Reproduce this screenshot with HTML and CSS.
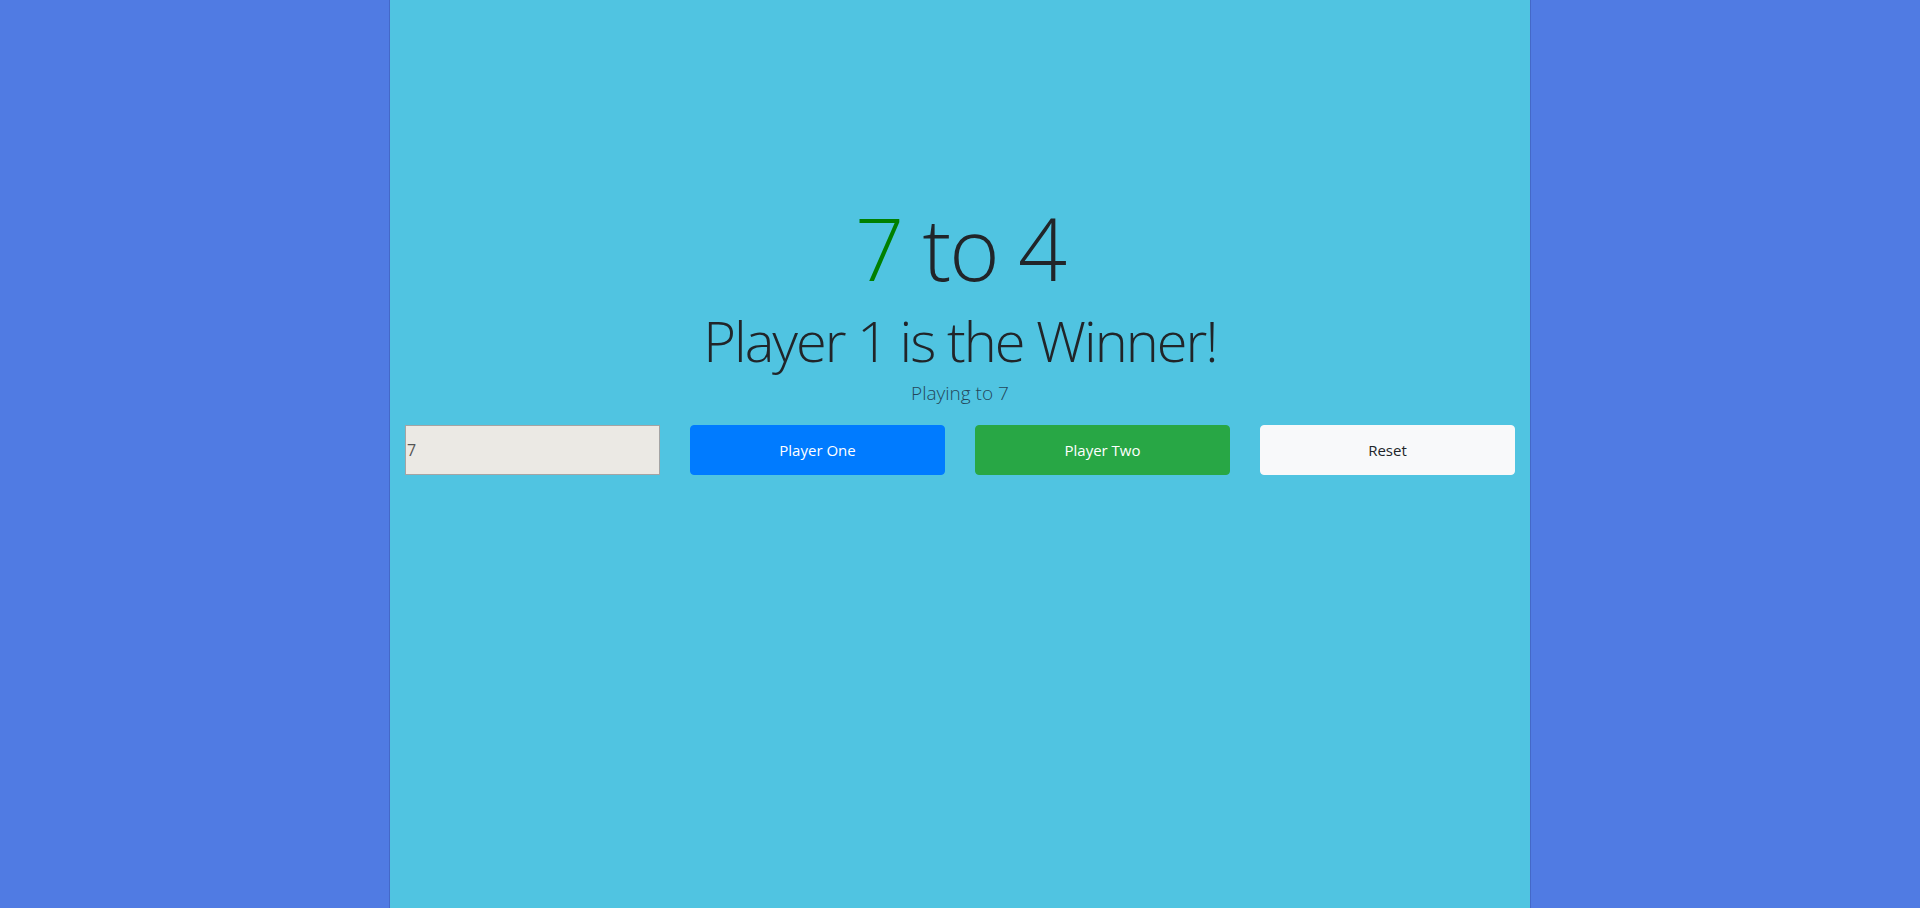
FILE: index.html
```html
<!DOCTYPE html>
<html lang="en">
<head>
<meta charset="utf-8">
<title>Score Keeper</title>
<link rel="stylesheet" href="styles.css">
</head>
<body>
<main class="container">
  <h1 class="score"><span class="win">7</span> to 4</h1>
  <h2 class="winner">Player 1 is the Winner!</h2>
  <p class="lead">Playing to 7</p>
  <div class="row">
    <input class="field" type="number" value="7">
    <button class="btn btn-blue">Player One</button>
    <button class="btn btn-green">Player Two</button>
    <button class="btn btn-light">Reset</button>
  </div>
</main>
</body>
</html>
```

FILE: styles.css
```css
html, body {
  margin: 0;
  padding: 0;
  height: 100%;
}
body {
  background: #507be3;
  font-family: "Open Sans", "Liberation Sans", sans-serif;
  color: #212529;
}
.container {
  box-sizing: border-box;
  width: 1142px;
  min-height: 100%;
  margin: 0 auto;
  padding: 196px 15px 0;
  background: #50c4e1;
  border-left: 1px solid #4468c8;
  border-right: 1px solid #4468c8;
  text-align: center;
}
.score {
  margin: 0;
  font-size: 86px;
  font-weight: 300;
  line-height: 103px;
  letter-spacing: -2px;
}
.win {
  color: #008000;
}
.winner {
  margin: 8px 0 0;
  font-size: 56px;
  font-weight: 300;
  line-height: 67px;
  letter-spacing: -2px;
}
.lead {
  margin: 5px 0 18px;
  font-size: 19px;
  font-weight: 300;
  line-height: 28px;
  color: #24475a;
}
.row {
  display: grid;
  grid-template-columns: repeat(4, 1fr);
  column-gap: 30px;
}
.field {
  box-sizing: border-box;
  height: 50px;
  width: 100%;
  margin: 0;
  padding: 0 1px;
  background: #ebe9e4;
  border: 1px solid #a4a4a4;
  font-family: "Open Sans", sans-serif;
  font-size: 16px;
  color: #555;
  -moz-appearance: textfield;
}
.field::-webkit-inner-spin-button,
.field::-webkit-outer-spin-button {
  -webkit-appearance: none;
  margin: 0;
}
.btn {
  height: 50px;
  border: 1px solid transparent;
  border-radius: 4px;
  font-family: "Open Sans", sans-serif;
  font-size: 15px;
  cursor: pointer;
}
.btn-blue {
  background: #007bff;
  border-color: #007bff;
  color: #fff;
}
.btn-green {
  background: #28a745;
  border-color: #28a745;
  color: #fff;
}
.btn-light {
  background: #f8f9fa;
  border-color: #f8f9fa;
  color: #212529;
}
```
